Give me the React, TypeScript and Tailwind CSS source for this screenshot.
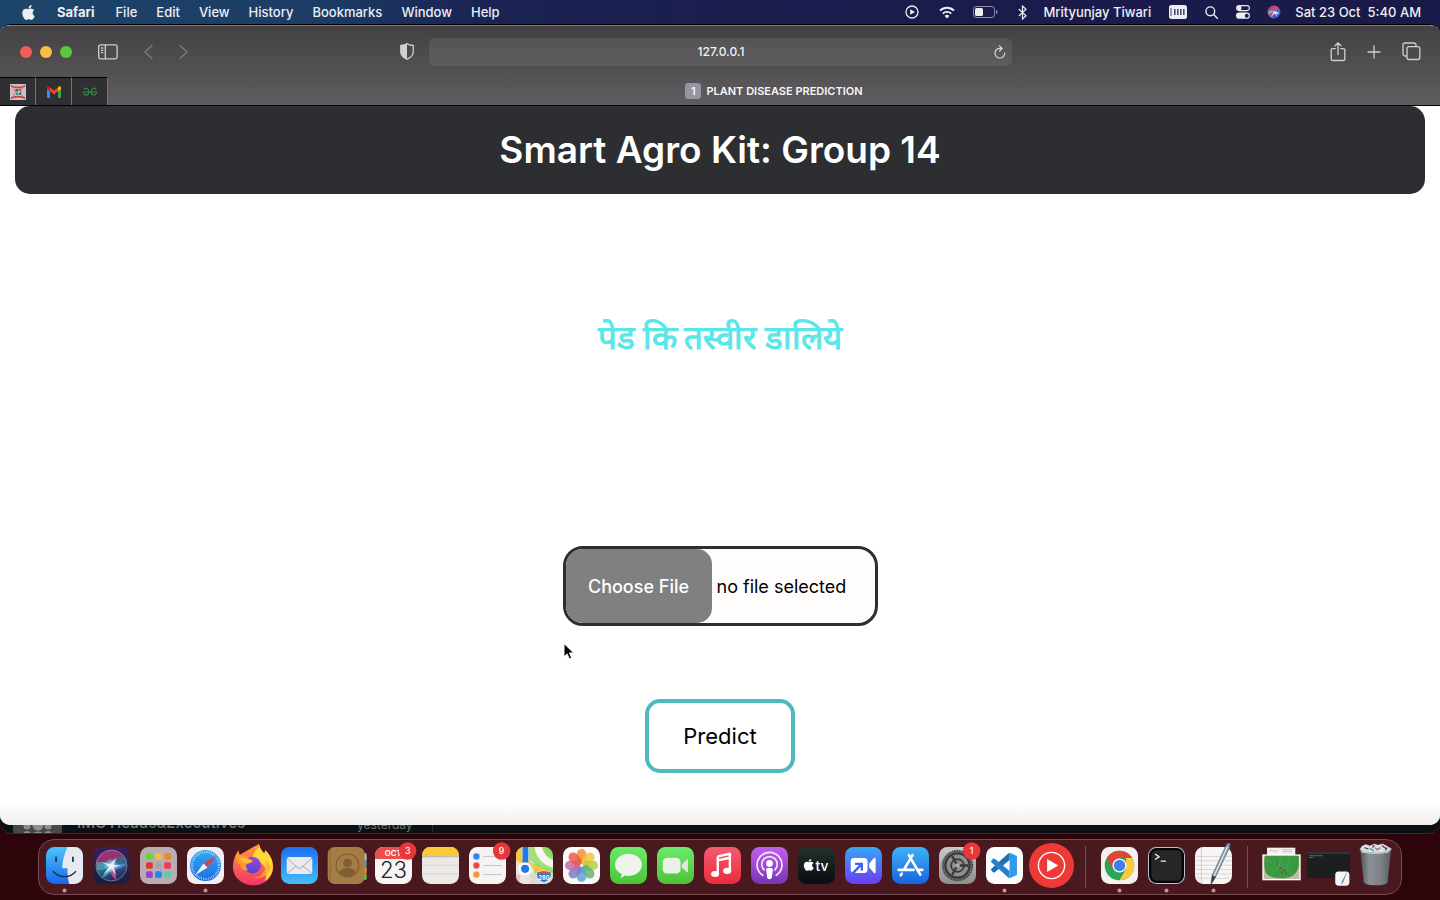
import { useState } from "react";
import type { ReactNode } from "react";
import { FaApple } from "react-icons/fa";

const menus = ["File", "Edit", "View", "History", "Bookmarks", "Window", "Help"];

function MenuBar() {
  return (
    <header className="flex h-6 shrink-0 items-center justify-between pr-[19px] pl-[21px] text-[13px] leading-6 font-medium text-[#eceef2]">
      <nav className="flex items-center gap-[19px]" aria-label="Menu bar">
        <button type="button" aria-label="Apple menu" className="mr-0.5">
          <FaApple className="h-[17px] w-[15px]" />
        </button>
        <button type="button" className="mr-0.5 font-bold">Safari</button>
        {menus.map((m) => (
          <button type="button" key={m}>{m}</button>
        ))}
      </nav>
      <div className="flex items-center">
        <button type="button" aria-label="Now playing" className="mr-5">
          <svg width="14" height="14" viewBox="0 0 14 14" fill="none">
            <circle cx="7" cy="7" r="6" stroke="#eceef2" strokeWidth="1.3" />
            <path d="M5.2 4.2v5.6L10 7z" fill="#eceef2" />
          </svg>
        </button>
        <button type="button" aria-label="Wi-Fi" className="mr-[18px]">
          <svg width="16" height="13" viewBox="0 0 16 13" fill="none" stroke="#eceef2" strokeWidth="1.9">
            <path d="M1 4.6a10 10 0 0 1 14 0" />
            <path d="M3.7 7.6a6.2 6.2 0 0 1 8.6 0" />
            <path d="M8 12.4 5.6 9.9a3.5 3.5 0 0 1 4.8 0z" fill="#eceef2" stroke="none" />
          </svg>
        </button>
        <button type="button" aria-label="Battery" className="mr-5">
          <svg width="25" height="12" viewBox="0 0 25 12" fill="none">
            <rect x=".5" y=".5" width="21" height="11" rx="3" stroke="#8f90a9" />
            <rect x="2" y="2" width="8" height="8" rx="1.5" fill="#eceef2" />
            <path d="M23 4v4c1-.3 1.5-1 1.500-2S24 4.300 23 4z" fill="#8f90a9" />
          </svg>
        </button>
        <button type="button" aria-label="Bluetooth" className="mr-4">
          <svg width="9" height="15" viewBox="0 0 9 15" fill="none" stroke="#eceef2" strokeWidth="1.2">
            <path d="M.8 4 8 10.800 4.500 14V1L8 4.200.8 11" />
          </svg>
        </button>
        <button type="button" className="mr-[18px]">Mrityunjay Tiwari</button>
        <button type="button" aria-label="Memory" className="mr-[18px]">
          <svg width="18" height="14" viewBox="0 0 18 14">
            <rect width="18" height="14" rx="2.500" fill="#eceef2" />
            <path d="M1.500 3h1v8h-1zM5 4h1.600v6H5zM8 4h1.600v6H8zM11 4h1.600v6H11zM14 4h1.600v6H14z" fill="#4c4d78" />
          </svg>
        </button>
        <button type="button" aria-label="Spotlight" className="mr-[18px]">
          <svg width="13" height="13" viewBox="0 0 13 13" fill="none" stroke="#eceef2" strokeWidth="1.400">
            <circle cx="5.300" cy="5.300" r="4.400" />
            <path d="m8.600 8.600 4 4" strokeLinecap="round" />
          </svg>
        </button>
        <button type="button" aria-label="Control Centre" className="mr-[17px]">
          <svg width="14" height="14" viewBox="0 0 14 14">
            <rect x=".6" y=".6" width="12.800" height="5" rx="2.500" fill="none" stroke="#eceef2" strokeWidth="1.100" />
            <circle cx="3.300" cy="3.100" r="2.300" fill="#eceef2" />
            <rect y="7.600" width="14" height="6.200" rx="3.100" fill="#eceef2" />
            <circle cx="10.800" cy="10.700" r="2" fill="#1b1d4c" />
          </svg>
        </button>
        <button type="button" aria-label="Siri" className="mr-[14px]">
          <svg width="14" height="14" viewBox="0 0 14 14">
            <defs>
              <linearGradient id="siriMini" x1="0" y1="0" x2="1" y2="1">
                <stop offset="0" stopColor="#8b3b8f" />
                <stop offset=".4" stopColor="#e0457e" />
                <stop offset=".65" stopColor="#3c6bd8" />
                <stop offset="1" stopColor="#1d2f8a" />
              </linearGradient>
            </defs>
            <circle cx="7" cy="7" r="6.500" fill="url(#siriMini)" />
            <path d="M1 8.500C2 5 4 4.500 7 6.500 5 7.500 3 8.500 1.500 9z" fill="#49cdd0" />
            <path d="M7 6.200c2 0 4.500 1 5.500 3L9 8.300l2 4-3.500-4L4 12l2.300-4.500z" fill="#e7f4fb" />
          </svg>
        </button>
        <button type="button" className="flex gap-[7px]">
          <span>Sat 23 Oct</span>
          <span>5:40 AM</span>
        </button>
      </div>
    </header>
  );
}

function Toolbar() {
  return (
    <div className="grid h-[51px] grid-cols-[1fr_auto_1fr] items-center">
      <div className="flex items-center pl-5">
        <div className="flex gap-2">
          <button type="button" aria-label="Close" className="size-3 rounded-full bg-[#f25e57]" />
          <button type="button" aria-label="Minimise" className="size-3 rounded-full bg-[#f8bd45]" />
          <button type="button" aria-label="Zoom" className="size-3 rounded-full bg-[#5ac840]" />
        </div>
        <button type="button" aria-label="Sidebar" className="ml-[26px]">
          <svg width="20" height="16" viewBox="0 0 20 16" fill="none" stroke="#cfced0" strokeWidth="1.300">
            <rect x=".7" y=".9" width="18.400" height="14" rx="1.800" />
            <path d="M7.300 1v14M3 4h2.300M3 6.300h2.300M3 8.600h2.300" />
          </svg>
        </button>
        <button type="button" aria-label="Back" className="ml-[26px]">
          <svg width="9" height="16" viewBox="0 0 9 16" fill="none" stroke="#7b797d" strokeWidth="1.400" strokeLinecap="round">
            <path d="M8 1.500 1 8l7 6.500" />
          </svg>
        </button>
        <button type="button" aria-label="Forward" className="ml-[26px]">
          <svg width="9" height="16" viewBox="0 0 9 16" fill="none" stroke="#7b797d" strokeWidth="1.400" strokeLinecap="round">
            <path d="m1 1.500 7 6.500-7 6.500" />
          </svg>
        </button>
        <button type="button" aria-label="Privacy report" className="mr-[15px] ml-auto">
          <svg width="14" height="17" viewBox="0 0 14 17">
            <path d="M7 .8C8.500 2 11 2.300 13.200 2.500V9c0 3.500-3 5.800-6.200 7.200C3.800 14.800.8 12.500.8 9V2.500C3 2.300 5.500 2 7 .8z" fill="none" stroke="#cfced0" strokeWidth="1.300" />
            <path d="M7 .8v15.400C3.800 14.800.8 12.500.8 9V2.500C3 2.300 5.500 2 7 .8z" fill="#cfced0" />
          </svg>
        </button>
      </div>
      <div className="flex h-7 w-[583px] items-center rounded-md bg-white/8 pr-[6px] pl-5">
        <input
          aria-label="Address"
          defaultValue="127.0.0.1"
          className="min-w-0 flex-1 bg-transparent text-center text-[12px] font-medium text-[#f3f3f4] outline-none"
        />
        <button type="button" aria-label="Reload">
          <svg width="12" height="14" viewBox="0 0 12 14" fill="none" stroke="#d8d7d9" strokeWidth="1.200" strokeLinecap="round">
            <path d="M7.200 3.500C3.800 2.700 1 5 1 8.100A4.800 4.800 0 0 0 5.800 13a4.800 4.800 0 0 0 4.900-4.900M5.500.8l2.600 2.700-2.600 2.600" />
          </svg>
        </button>
      </div>
      <div className="flex items-center justify-end pr-[19px]">
        <button type="button" aria-label="Share" className="mr-[21px]">
          <svg width="16" height="20" viewBox="0 0 16 20" fill="none" stroke="#cfced0" strokeWidth="1.300" strokeLinecap="round">
            <path d="M5.300 6.600H2.500a1.300 1.300 0 0 0-1.300 1.300v9.300a1.300 1.300 0 0 0 1.300 1.300h11a1.300 1.300 0 0 0 1.300-1.300V7.900a1.300 1.300 0 0 0-1.300-1.300h-2.800M8 12.500V1M5 3.800 8 1l3 2.800" />
          </svg>
        </button>
        <button type="button" aria-label="New tab" className="mr-[21px]">
          <svg width="14" height="14" viewBox="0 0 14 14" stroke="#cfced0" strokeWidth="1.300" strokeLinecap="round">
            <path d="M7 1v12M1 7h12" />
          </svg>
        </button>
        <button type="button" aria-label="Tab overview">
          <svg width="19" height="19" viewBox="0 0 19 19" fill="none" stroke="#cfced0" strokeWidth="1.300">
            <path d="M4.800 14H3a2 2 0 0 1-2-2V3a2 2 0 0 1 2-2h9a2 2 0 0 1 2 2v1.500" />
            <rect x="5" y="4.700" width="12.800" height="12.800" rx="2" />
          </svg>
        </button>
      </div>
    </div>
  );
}

function PinnedTab({ label, children }: { label: string; children: ReactNode }) {
  return (
    <button
      type="button"
      aria-label={label}
      className="flex w-9 items-center justify-center border-t border-r border-t-black border-r-[#757377] bg-[#302f31]"
    >
      {children}
    </button>
  );
}

function TabBar() {
  return (
    <div className="flex h-[29px] border-b border-black">
      <PinnedTab label="College portal">
        <svg width="16" height="16" viewBox="0 0 16 16">
          <rect width="16" height="16" fill="#c9c3c6" />
          <path d="M1 1.500c2 2.500 12 2.500 14 0M1 14.500c2-2.500 12-2.500 14 0" stroke="#c8453f" strokeWidth="1.600" fill="none" />
          <path d="M3.500 4c2 2.500 2 5.500 0 8M12.500 4c-2 2.500-2 5.500 0 8" stroke="#d8827b" strokeWidth="1.200" fill="none" />
          <rect x="5.500" y="5" width="2.500" height="2.500" fill="#27607c" />
          <rect x="8.500" y="4.500" width="2.500" height="2.500" fill="#e2574b" />
          <rect x="6" y="8.500" width="2.200" height="2.500" fill="#3d9a62" />
          <rect x="9" y="8.500" width="2" height="2.500" fill="#356fb0" />
        </svg>
      </PinnedTab>
      <PinnedTab label="Gmail">
        <svg width="16" height="12" viewBox="0 0 16 12">
          <path d="M1 2v9a1 1 0 0 0 1 1h2V5z" fill="#4285f4" />
          <path d="M15 2v9a1 1 0 0 1-1 1h-2V5z" fill="#34a853" />
          <path d="M12 1.500V5.300l3-2.300V2c0-1.800-1.700-2.400-3-.5z" fill="#fbbc04" />
          <path d="M4 1.500 8 4.600l4-3.100v3.800L8 8.500 4 5.300z" fill="#ea4335" />
          <path d="M4 1.500v3.800L1 3V2C1 .2 2.700-.4 4 1.500z" fill="#c5221f" />
        </svg>
      </PinnedTab>
      <PinnedTab label="GeeksforGeeks">
        <svg width="16" height="10" viewBox="0 0 16 10" fill="none" stroke="#2f8d46" strokeWidth="1.200">
          <path d="M.5 5h15M2 2.300C3.500.2 6.800 1.500 6.800 5c0 3.600-4.400 4.400-5.100 1M14 2.300C12.500.2 9.200 1.500 9.200 5c0 3.600 4.400 4.400 5.100 1V5" />
        </svg>
      </PinnedTab>
      <button type="button" className="flex flex-1 items-center justify-center gap-[5px] text-[11px] font-semibold text-[#f6f6f7]">
        <span className="flex h-4 w-4 items-center justify-center rounded-[3px] bg-[#9495a3]">1</span>
        PLANT DISEASE PREDICTION
      </button>
    </div>
  );
}

function Page() {
  const [fileName, setFileName] = useState("no file selected");
  return (
    <main className="relative flex flex-1 flex-col items-center bg-[linear-gradient(to_top,#f0f0f0,#ffffff_24px)] text-black">
      <div className="w-full px-[15px]">
        <h1 className="rounded-[15px] bg-[#2d2e31] py-[14px] text-center text-[37px] leading-[60px] font-semibold text-white">
          Smart Agro Kit: Group 14
        </h1>
      </div>
      <h2 lang="hi" className="mt-[119px] text-[33px] leading-[48px] font-bold text-[#5ce6e8]">
        पेड कि तस्वीर डालिये
      </h2>
      <form className="flex flex-col items-center" onSubmit={(e) => e.preventDefault()}>
        <label
          htmlFor="plant-image"
          className="mt-[185px] flex h-20 w-[315px] cursor-pointer items-stretch overflow-hidden rounded-[20px] border-3 border-[#2d2e31] bg-[#fffdfc] text-[18px]"
        >
          <span className="flex w-[146px] items-center justify-center rounded-[15px] bg-[#808080] font-medium text-white">
            Choose File
          </span>
          <span className="flex items-center pl-[5px]">{fileName}</span>
          <input
            id="plant-image"
            type="file"
            accept="image/*"
            className="sr-only"
            onChange={(e) => setFileName(e.target.files?.[0]?.name ?? "no file selected")}
          />
        </label>
        <button
          type="submit"
          className="mt-[73px] h-[74px] w-[150px] rounded-[15px] border-4 border-[#4fb9c0] bg-white text-[22px]"
        >
          Predict
        </button>
      </form>
      <svg className="pointer-events-none absolute top-[536px] left-[562px]" width="14" height="20" viewBox="0 0 14 20">
        <path d="M2 1.500v13.300l3.100-2.900 2.200 5 2.400-1-2.200-4.900h4.200z" fill="#000" stroke="#fff" strokeWidth="1" />
      </svg>
    </main>
  );
}

/* Dock artwork is drawn on a 110-unit square. */
function Tile({ fill }: { fill: string }) {
  return <rect width="110" height="110" rx="25" fill={fill} />;
}

function Badge({ n }: { n: string }) {
  return (
    <g>
      <circle cx="97" cy="12" r="26" fill="#e7373a" />
      <text x="97" y="21" fontSize="26" fontWeight="500" textAnchor="middle" fill="#fff">{n}</text>
    </g>
  );
}

const petals = ["#f5922c", "#f4c63a", "#b8cf3f", "#6bb36b", "#57a8d8", "#7d7cc4", "#c56aa8", "#ec5a43"];
const launchColors = ["#62d837", "#f6bd33", "#f08530", "#e0352f", "#a5a9ad", "#f2385a", "#9a42d4", "#1b86f5", "#55cfa5"];

type App = { name: string; running?: boolean; art: ReactNode };

const apps: App[] = [
  {
    name: "Finder",
    running: true,
    art: (
      <>
        <Tile fill="url(#finderBlue)" />
        <path d="M64 0C54 20 49 42 48 63h16c-1 16 1 32 5 47h16a25 25 0 0 0 25-25V25A25 25 0 0 0 85 0z" fill="#e6e9f0" />
        <path d="M22 73c16 20 50 20 66 0" stroke="#1c2b3d" strokeWidth="4" fill="none" strokeLinecap="round" />
        <path d="M30 31v11M80 31v11" stroke="#1c2b3d" strokeWidth="5" strokeLinecap="round" />
      </>
    ),
  },
  {
    name: "Siri",
    art: (
      <>
        <Tile fill="url(#siriBg)" />
        <circle cx="55" cy="55" r="46" fill="url(#siriOrb)" stroke="#9c93b5" strokeWidth="2" />
        <path d="M12 46c20-4 30 0 42 8C40 66 25 72 12 66z" fill="#35c6c9" opacity=".6" />
        <path d="M55 54c15 0 28-8 44-4-5 12-25 20-44 10z" fill="#5a8de0" opacity=".7" />
        <path d="M54 54c12 12 16 28 14 44-12-10-20-26-18-42z" fill="#e7509d" opacity=".8" />
        <path d="M54 56C42 68 34 80 26 90c16-4 26-14 32-26z" fill="#5fe0e0" opacity=".6" />
        <circle cx="54" cy="55" r="22" fill="url(#siriGlow)" />
        <path d="M26 44c12 4 20 7 27 8 3-8 9-15 18-20-5 8-8 14-9 21l24 3-25 4c4 8 6 15 6 23-5-7-9-14-12-20-7 8-14 13-24 16 7-6 12-13 17-20z" fill="#f2feff" opacity=".75" />
      </>
    ),
  },
  {
    name: "Launchpad",
    art: (
      <>
        <Tile fill="#b9adb2" />
        {launchColors.map((c, i) => (
          <rect key={c} x={18 + (i % 3) * 27} y={18 + Math.floor(i / 3) * 27} width="20" height="20" rx="5" fill={c} />
        ))}
      </>
    ),
  },
  {
    name: "Safari",
    running: true,
    art: (
      <>
        <Tile fill="#f0f0f1" />
        <circle cx="55" cy="55" r="46" fill="url(#safariBlue)" />
        <circle cx="55" cy="55" r="40" fill="none" stroke="#dff1ff" strokeWidth="7" strokeDasharray="1.600 3.636" />
        <path d="M86 26 61 61 49 49z" fill="#ec3b34" />
        <path d="M24 84 49 49l12 12z" fill="#f4f4f6" />
      </>
    ),
  },
  {
    name: "Firefox",
    art: (
      <>
        <path d="M74-9c3 14 10 22 16 28 2-4 3-7 2-10 18 16 27 38 24 58-4 28-28 47-58 47C24 114-4 90-3 58c0-18 6-34 16-48 0 6 1 10 3 14z" fill="url(#foxFire)" />
        <path d="M74-9c3 14 10 22 16 28 2-4 3-7 2-10 18 16 27 38 22 62-4 14-12 24-22 30 8-22 4-42-12-54-10-6-18-8-26-12 2-14 10-26 20-34z" fill="#ffd93a" />
        <path d="M94 40c4 26-8 48-34 52 26 4 44-10 50-30-2-10-8-18-16-22z" fill="#ffae2e" opacity=".8" />
        <circle cx="55" cy="54" r="25" fill="url(#foxPurple)" />
        <path d="M6 36c0-10 3-18 7-25 1 6 3 11 7 15 8-2 15-1 21 4 2 6 6 9 14 9 2 6-8 10-16 11-6 4-4 14 4 19-14 2-22-4-24-15-6-4-10-10-13-18z" fill="#ff9a2c" />
        <path d="M18 34c8-2 14-2 20 2 4 3 9 4 16 4-2 6-10 8-18 9-8-3-14-8-18-15z" fill="#ffbf3d" />
      </>
    ),
  },
  {
    name: "Mail",
    art: (
      <>
        <Tile fill="url(#mailBlue)" />
        <rect x="17" y="30" width="76" height="50" rx="6" fill="#e8eaed" />
        <path d="M18 33 49 61q6 5 12 0L92 33M19 78l26-22M91 78 65 56" stroke="#9aa0a8" strokeWidth="2.500" fill="none" />
      </>
    ),
  },
  {
    name: "Contacts",
    art: (
      <>
        <rect x="94" y="18" width="21" height="24" rx="5" fill="#b8b8b8" />
        <rect x="94" y="38" width="21" height="22" rx="5" fill="#2fa7e0" />
        <rect x="94" y="58" width="21" height="22" rx="5" fill="#ef8a33" />
        <rect x="94" y="78" width="21" height="20" rx="5" fill="#5ec04a" />
        <rect x="-1" width="110" height="110" rx="21" fill="#a67c45" />
        <path d="M7 6v98" stroke="#83602f" strokeWidth="2" />
        <circle cx="58" cy="55" r="34" fill="none" stroke="#7b5a2c" strokeWidth="3" />
        <circle cx="58" cy="47" r="13" fill="#7f5e31" />
        <path d="M33 76c4-18 46-18 50 0-12 16-38 16-50 0z" fill="#7f5e31" />
      </>
    ),
  },
  {
    name: "Calendar",
    art: (
      <>
        <Tile fill="#f7f5f5" />
        <path d="M0 36V25A25 25 0 0 1 25 0h60a25 25 0 0 1 25 25v11z" fill="#ee4f4b" />
        <text x="54" y="27" fontSize="23" fontWeight="600" textAnchor="middle" fill="#fff">OCT</text>
        <text x="55" y="93" fontSize="66" fontWeight="300" textAnchor="middle" fill="#232323">23</text>
        <Badge n="3" />
      </>
    ),
  },
  {
    name: "Notes",
    art: (
      <>
        <Tile fill="#ece8e5" />
        <path d="M0 27V25A25 25 0 0 1 25 0h60a25 25 0 0 1 25 25v2z" fill="#fbc935" />
        <path d="M0 29h110" stroke="#8e8574" strokeWidth="3" strokeDasharray="3 2" />
        <path d="M0 54h110M0 80h110" stroke="#cdc9c6" strokeWidth="2" />
      </>
    ),
  },
  {
    name: "Reminders",
    art: (
      <>
        <Tile fill="#f6f4f3" />
        {["#2f86f0", "#ea4848", "#f0993c"].map((c, i) => (
          <g key={c}>
            <circle cx="22" cy={28 + i * 27} r="8.500" fill={c} stroke={c} strokeOpacity=".4" strokeWidth="5" />
            <path d={`M42 ${28 + i * 27}h56`} stroke="#bdbaba" strokeWidth="2.500" />
          </g>
        ))}
        <Badge n="9" />
      </>
    ),
  },
  {
    name: "Maps",
    art: (
      <>
        <g clipPath="url(#tileClip)">
          <rect width="110" height="110" fill="#8edb6b" />
          <path d="M0 0h54v110H0z" fill="#e9e6df" />
          <path d="M38 0h34l38 50v20L38 40z" fill="#a3e07d" />
          <path d="M66-10a60 60 0 0 0 54 62" stroke="#f6f5ef" strokeWidth="22" fill="none" />
          <path d="M-5 28 115 92" stroke="#f6c643" strokeWidth="15" />
          <path d="M-5 20 18 45V0H-5z" fill="#f5c944" />
          <path d="M42 78h68v32H42z" fill="#dedad4" />
          <path d="M0 82h12v28H0z" fill="#f3bfc6" />
          <path d="M28-5v62" stroke="#2179e8" strokeWidth="17" />
        </g>
        <circle cx="27" cy="65" r="20" fill="#fff" />
        <circle cx="27" cy="65" r="12" fill="#2078ef" />
        <path d="M62 76q20-9 42 0 5 20-21 30-26-10-21-30z" fill="#2d6fc4" stroke="#fff" strokeWidth="2" />
        <path d="M63 76q20-8 40 0v4H63z" fill="#dd4b45" />
        <text x="83" y="97" fontSize="17" fontWeight="700" textAnchor="middle" fill="#fff">280</text>
      </>
    ),
  },
  {
    name: "Photos",
    art: (
      <>
        <Tile fill="#fafafa" />
        {petals.map((c, i) => (
          <rect key={c} x="41" y="6" width="28" height="45" rx="14" fill={c} opacity=".85" transform={`rotate(${i * 45} 55 55)`} />
        ))}
      </>
    ),
  },
  {
    name: "Messages",
    art: (
      <>
        <Tile fill="url(#green)" />
        <path d="M55 20c23 0 40 15 40 33S78 86 55 86c-4 0-7 0-11-1-4 4-9 6-15 7 4-4 6-7 6-11C23 75 15 65 15 53c0-18 17-33 40-33z" fill="#eff3ee" />
      </>
    ),
  },
  {
    name: "FaceTime",
    art: (
      <>
        <Tile fill="url(#green)" />
        <rect x="17" y="32" width="53" height="47" rx="13" fill="#eaf2e8" />
        <path d="M74 52 88 37q4-3 4 2v33q0 5-4 2L74 60z" fill="#dcebd9" />
      </>
    ),
  },
  {
    name: "Music",
    art: (
      <>
        <Tile fill="url(#musicRed)" />
        <path d="M41 28 77 20v50M41 78V28M41 40l36-8" stroke="#fff" strokeWidth="7" fill="none" strokeLinejoin="round" />
        <ellipse cx="33" cy="80" rx="12" ry="9" fill="#fff" />
        <ellipse cx="69" cy="71" rx="12" ry="9" fill="#fff" />
      </>
    ),
  },
  {
    name: "Podcasts",
    art: (
      <>
        <Tile fill="url(#podPurple)" />
        <g fill="none" stroke="#f5e8fb" strokeWidth="5" strokeLinecap="round">
          <path d="M35 84a37 37 0 1 1 40 0" />
          <path d="M39 68a23 23 0 1 1 32 0" />
        </g>
        <circle cx="55" cy="49" r="10" fill="#fff" />
        <path d="M45 68q0-6 10-6t10 6l-3 22q-1 6-7 6t-7-6z" fill="#fff" />
      </>
    ),
  },
  {
    name: "TV",
    art: (
      <>
        <Tile fill="url(#tvDark)" />
        <FaApple x="12" y="33" size={40} color="#fff" />
        <text x="71" y="70" fontSize="41" fontWeight="500" textAnchor="middle" fill="#fff">tv</text>
      </>
    ),
  },
  {
    name: "Screen recorder",
    art: (
      <>
        <Tile fill="url(#zoomBlue)" />
        <rect x="17" y="33" width="50" height="44" rx="10" fill="#fff" />
        <path d="M72 50 86 33q5-3 5 3v38q0 6-5 3L72 60z" fill="#fff" />
        <path d="M22 80 46 54M30 50h20v20" stroke="#3f63ee" strokeWidth="7" fill="none" />
      </>
    ),
  },
  {
    name: "App Store",
    art: (
      <>
        <Tile fill="url(#storeBlue)" />
        <g stroke="#fff" strokeWidth="8" strokeLinecap="round" fill="none">
          <path d="M50 24 84 82M61 24 35 68M20 68h44M78 68h12M29 79l-3 5" />
        </g>
      </>
    ),
  },
  {
    name: "System Preferences",
    art: (
      <>
        <Tile fill="url(#prefsGrey)" />
        <circle cx="55" cy="55" r="44" fill="#7d7f80" stroke="#2f3132" strokeWidth="5" strokeDasharray="3 2" />
        <circle cx="55" cy="55" r="36" fill="#8d8f90" stroke="#37393a" strokeWidth="7" />
        <circle cx="55" cy="55" r="19" fill="none" stroke="#37393a" strokeWidth="5" />
        <path d="M55 55h32M55 55 39 27M55 55 39 83" stroke="#37393a" strokeWidth="7" />
        <circle cx="55" cy="55" r="7" fill="#a9abac" />
        <Badge n="1" />
      </>
    ),
  },
  {
    name: "Visual Studio Code",
    running: true,
    art: (
      <>
        <Tile fill="#fdfdfd" />
        <path d="M70 17 92 27v56L70 93z" fill="#2f9bea" />
        <path d="M70 17v22L26 75q-3 2-5 0l-5-5q-2-2 0-5L66 19z" fill="#1f6db8" />
        <path d="M70 93V71L26 35q-3-2-5 0l-5 5q-2 3 0 5L66 91z" fill="#2480c9" />
      </>
    ),
  },
  {
    name: "YouTube Music",
    art: (
      <>
        <circle cx="55" cy="55" r="67" fill="#ee3a36" />
        <circle cx="55" cy="55" r="39" fill="none" stroke="#fff" strokeWidth="4" />
        <path d="M42 36v38l33-19z" fill="#fff" />
      </>
    ),
  },
];

const tools: App[] = [
  {
    name: "Chrome",
    running: true,
    art: (
      <>
        <Tile fill="#f3f2f1" />
        <circle cx="55" cy="55" r="44" fill="#2da44f" />
        <path d="M16.900 33a44 44 0 0 1 76.200 0H55L36 66z" fill="#e0443a" />
        <path d="M93.100 33A44 44 0 0 1 55 99l19-33V33z" fill="#fccb3c" />
        <circle cx="55" cy="55" r="21" fill="#fff" />
        <circle cx="55" cy="55" r="17" fill="#3f7ff0" />
      </>
    ),
  },
  {
    name: "Terminal",
    running: true,
    art: (
      <>
        <Tile fill="#b5c3c9" />
        <rect x="3" y="3" width="104" height="104" rx="22" fill="#050505" />
        <rect x="10" y="10" width="90" height="90" rx="15" fill="#252628" />
        <path d="m21 21 12 8-12 8M38 42h15" stroke="#f2f2f2" strokeWidth="4" fill="none" />
      </>
    ),
  },
  {
    name: "TextEdit",
    running: true,
    art: (
      <>
        <Tile fill="#f7f6f5" />
        <path d="M0 28h110M0 41h110M0 54h110M0 67h110M0 80h110M0 93h110" stroke="#c9c8c8" strokeWidth="2" />
        <path d="M19 0v110" stroke="#eba8a8" strokeWidth="2" />
        <path d="m93-6 11 5-42 89-15 24 4-28z" fill="#8fa3b3" stroke="#566572" strokeWidth="2" />
        <path d="m97-2-42 92" stroke="#e8f0f5" strokeWidth="3" />
        <path d="m51 84 11 5-15 23z" fill="#3d4247" />
        <path d="m97-13 9 4-4 8-9-4z" fill="#6d8fac" />
      </>
    ),
  },
];

const stacks: App[] = [
  {
    name: "Downloads",
    art: (
      <>
        <path d="M12 2h84v26H12z" fill="#f4f2f0" />
        <path d="M18 12c12-6 16 6 28-2M56 8h32M58 14h28" stroke="#d2a36c" strokeWidth="2" fill="none" />
        <rect x="-2" y="22" width="114" height="77" fill="#fff" />
        <rect x="2" y="26" width="106" height="69" fill="#c6b8a8" />
        <path d="M6 26h100c2 20 2 38-8 50-10 14-28 18-44 17-18-1-38-3-46-17C4 64 2 48 6 26z" fill="#3a9a42" />
        <path d="M6 38c30 6 62 22 86 44M54 28l-6 30M80 32 70 64M26 84l22-26" stroke="#5cb25e" strokeWidth="1.500" fill="none" />
        <path d="M40 50h5M48 62h6M60 70h5M54 76h4M66 78h5" stroke="#7a4a40" strokeWidth="5" />
      </>
    ),
  },
  {
    name: "Minimised editor",
    art: (
      <>
        <rect x="-8" y="16" width="127" height="76" fill="#1d1e20" />
        <path d="M-8 18h127" stroke="#3b3e42" strokeWidth="4" />
        <path d="M-4 26h42M-4 31h14" stroke="#7d838a" strokeWidth="2" />
        <rect x="75" y="73" width="42" height="42" rx="10" fill="#f5f5f5" />
        <path d="m113 68-14 36-6 10 2-12z" fill="#6d8295" />
      </>
    ),
  },
  {
    name: "Bin",
    art: (
      <>
        <path d="M9 2h93L91 104q-2 10-35 10t-36-10z" fill="url(#binGrey)" />
        <path d="M10 6 14-2l12-6 12 4 14-6 10 4 14-4 12 6 12 8-6 12q-40 8-80 0z" fill="#dfe2e5" />
        <path d="m22 2 12 4M74-4l12 8M52-6l-6 8M90 2l-6 8" stroke="#5b4f47" strokeWidth="4" />
        <path d="m38 4 12 8M60 8l10-6" stroke="#2aa3c4" strokeWidth="4" />
        <path d="m54 2 8 8" stroke="#de6135" strokeWidth="4" />
        <path d="M9 4q4 14 47 14T102 4" stroke="#b3b7ba" strokeWidth="3" fill="none" />
      </>
    ),
  },
];

function DockItem({ app }: { app: App }) {
  return (
    <button type="button" aria-label={app.name} className="block">
      <svg width="47" height="54" viewBox="0 0 47 54" overflow="visible" fontFamily="Inter, sans-serif">
        <g transform="translate(5 7) scale(.3364)">{app.art}</g>
        {app.running && <circle cx="23.500" cy="50.500" r="2" fill="#d08f98" />}
      </svg>
    </button>
  );
}

function Grad({ id, from, to }: { id: string; from: string; to: string }) {
  return (
    <linearGradient id={id} x1="0" y1="0" x2="0" y2="1">
      <stop offset="0" stopColor={from} />
      <stop offset="1" stopColor={to} />
    </linearGradient>
  );
}

function Dock() {
  return (
    <footer className="flex shrink-0 justify-center pt-[5px] pb-[5px]">
      <svg width="0" height="0" className="absolute" aria-hidden="true">
        <defs>
          <Grad id="finderBlue" from="#4cc4fa" to="#1767ee" />
          <Grad id="siriBg" from="#3d1d5c" to="#14213d" />
          <Grad id="safariBlue" from="#38a7f2" to="#1a6fe0" />
          <Grad id="foxFire" from="#ff9f2f" to="#f5326b" />
          <Grad id="foxPurple" from="#9a4ae0" to="#5b3fd0" />
          <Grad id="mailBlue" from="#1f70f2" to="#44bdf9" />
          <Grad id="green" from="#6cea6b" to="#4cc238" />
          <Grad id="musicRed" from="#f45b73" to="#ea2b3b" />
          <Grad id="podPurple" from="#c25ff0" to="#7734b4" />
          <Grad id="tvDark" from="#24302d" to="#080d10" />
          <Grad id="zoomBlue" from="#35a6f5" to="#6d3df2" />
          <Grad id="storeBlue" from="#3fb2f5" to="#1763e0" />
          <Grad id="prefsGrey" from="#c9cbcb" to="#8d8f8f" />
          <linearGradient id="binGrey">
            <stop offset="0" stopColor="#4f5559" />
            <stop offset=".3" stopColor="#8b9094" />
            <stop offset=".7" stopColor="#7b8084" />
            <stop offset="1" stopColor="#565b5f" />
          </linearGradient>
          <radialGradient id="siriGlow">
            <stop offset="0" stopColor="#fff" stopOpacity=".9" />
            <stop offset="1" stopColor="#bff3ff" stopOpacity="0" />
          </radialGradient>
          <linearGradient id="siriOrb" x1="0" y1="0" x2=".4" y2="1">
            <stop offset="0" stopColor="#a03a86" />
            <stop offset=".35" stopColor="#9b2f6c" />
            <stop offset=".6" stopColor="#2c6d8f" />
            <stop offset="1" stopColor="#2b2b63" />
          </linearGradient>
          <clipPath id="tileClip">
            <rect width="110" height="110" rx="25" />
          </clipPath>
        </defs>
      </svg>
      <div className="flex h-14 rounded-[16px] border border-[#744a50] bg-[#4a191f] px-[2px]">
        {apps.map((a) => <DockItem key={a.name} app={a} />)}
        <div className="mx-[10px] mt-[6px] h-[42px] w-px bg-[#7c4b51]" />
        {tools.map((a) => <DockItem key={a.name} app={a} />)}
        <div className="mx-[10px] mt-[6px] h-[42px] w-px bg-[#7c4b51]" />
        {stacks.map((a) => <DockItem key={a.name} app={a} />)}
      </div>
    </footer>
  );
}

function ChatWindowEdge() {
  return (
    <div className="-mt-4 flex h-[25px] shrink-0 items-end overflow-hidden rounded-b-xl border-b border-[#2b3135] bg-[#0a1013] pl-[13px] text-[#6e7376]">
      <svg width="49" height="9" viewBox="0 0 49 9" aria-hidden="true">
        <path d="M0 0h49v9H0z" fill="#43484b" />
        <g fill="#8b8f91">
          <circle cx="14" cy="2" r="3.500" />
          <circle cx="25" cy="1" r="5.500" />
          <circle cx="35" cy="2" r="3.500" />
          <path d="M10 9q4-4 8 0zM20 9q5-3 10 0zM31 9q4-4 8 0z" />
        </g>
      </svg>
      <span className="w-[295px] pb-0.5 pl-[15px] text-[15px] leading-4 font-semibold">IMG Heads&amp;Executives</span>
      <span className="w-[75px] text-[12px] leading-4">yesterday</span>
      <span className="h-2 w-px bg-[#252b2f]" />
    </div>
  );
}

export default function App() {
  return (
    <div className="flex min-h-screen flex-col bg-[#2e040b] bg-[linear-gradient(to_right,#1d456a,#1c3c66_22%,#1a2454_33%,#1b1d4e_50%,#1a1a48)] bg-[length:100%_80px] bg-no-repeat font-[Inter,sans-serif]">
      <MenuBar />
      <div className="relative z-10 flex flex-1 flex-col overflow-hidden rounded-[10px] border-t border-black bg-white">
        <div className="shrink-0 border-t border-[#7b797c] bg-linear-to-b from-[#434143] to-[#5f5d60]">
          <Toolbar />
          <TabBar />
        </div>
        <Page />
      </div>
      <ChatWindowEdge />
      <Dock />
    </div>
  );
}
